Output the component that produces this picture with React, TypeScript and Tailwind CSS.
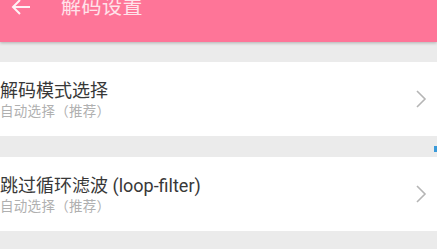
import React from "react";

const font = { fontFamily: 'Roboto, "Noto Sans CJK SC", sans-serif' };

function Chevron() {
  return (
    <svg width="12" height="20" viewBox="0 0 12 20" className="shrink-0">
      <path d="M2 2 L10 10 L2 18" fill="none" stroke="#b5b5b5" strokeWidth="1.6" />
    </svg>
  );
}

function Row({ title }: { title: string }) {
  return (
    <div className="flex h-[74px] items-center bg-white pr-[10px]">
      <div className="flex flex-1 flex-col pt-[1px]">
        <div className="text-[18px] leading-[20px] text-[#383838]">{title}</div>
        <div className="mt-[2px] text-[13.5px] leading-[16px] tracking-[0.3px] text-[#b0b0b0]">自动选择（推荐）</div>
      </div>
      <Chevron />
    </div>
  );
}

export default function App() {
  return (
    <div className="relative h-[249px] w-[437px] overflow-hidden bg-[#ebebeb]" style={font}>
      <div className="relative z-10 h-[42px] bg-[#fe7598] shadow-[0_1px_3px_rgba(0,0,0,0.25)]">
        <div className="flex h-[14px] items-center">
          <svg width="22" height="18" viewBox="0 0 22 18" className="ml-[10px]">
            <path d="M20 9 H3 M10 2 L3 9 L10 16" fill="none" stroke="#ffffff" strokeOpacity="0.9" strokeWidth="2" />
          </svg>
          <div className="ml-[29px] text-[20px] leading-[20px] tracking-[0.5px] text-white/80">解码设置</div>
        </div>
      </div>
      <div className="h-[20px]" />
      <Row title="解码模式选择" />
      <div className="relative h-[21px]">
        <div className="absolute right-0 top-[10px] h-[6px] w-[3px] bg-[#3a9ad9]" />
      </div>
      <Row title="跳过循环滤波 (loop-filter)" />
    </div>
  );
}
